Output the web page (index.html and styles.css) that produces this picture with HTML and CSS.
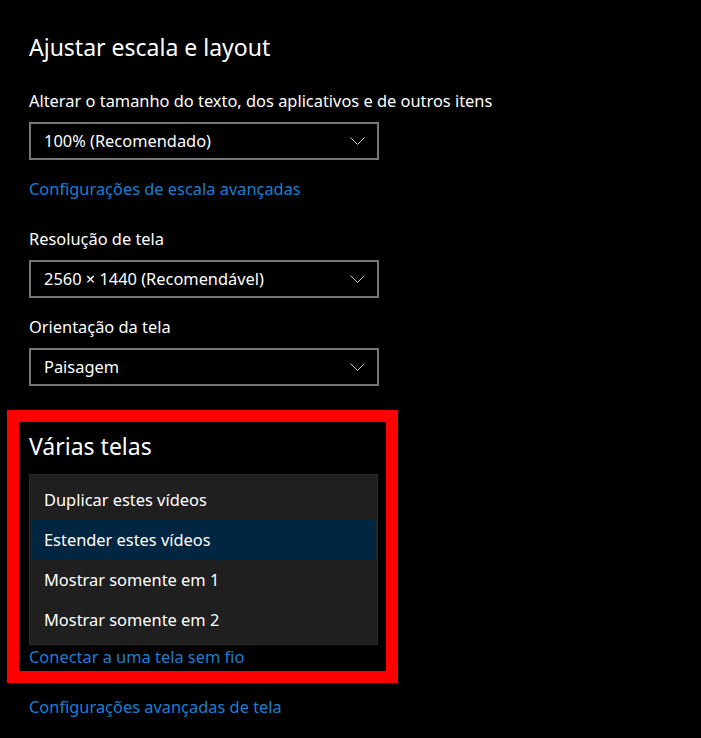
FILE: index.html
```html
<!DOCTYPE html>
<html lang="pt-BR">
<head>
    <meta charset="UTF-8">
    <meta name="viewport" content="width=device-width, initial-scale=1.0">
    <title>Vídeo</title>
    <link rel="stylesheet" href="styles.css">
</head>
<body>
    <div id="page">
        <h1 class="title">Ajustar escala e layout</h1>

        <p class="label">Alterar o tamanho do texto, dos aplicativos e de outros itens</p>
        <div class="combo">
            <span>100% (Recomendado)</span>
            <svg class="chevron" width="15" height="8" viewBox="0 0 15 8"><path d="M0.5 0.5 L7.5 7.5 L14.5 0.5" fill="none" stroke="#c8c8c8" stroke-width="1"/></svg>
        </div>
        <a class="link first" href="#">Configurações de escala avançadas</a>

        <p class="label">Resolução de tela</p>
        <div class="combo">
            <span>2560 × 1440 (Recomendável)</span>
            <svg class="chevron" width="15" height="8" viewBox="0 0 15 8"><path d="M0.5 0.5 L7.5 7.5 L14.5 0.5" fill="none" stroke="#c8c8c8" stroke-width="1"/></svg>
        </div>

        <p class="label small-gap">Orientação da tela</p>
        <div class="combo">
            <span>Paisagem</span>
            <svg class="chevron" width="15" height="8" viewBox="0 0 15 8"><path d="M0.5 0.5 L7.5 7.5 L14.5 0.5" fill="none" stroke="#c8c8c8" stroke-width="1"/></svg>
        </div>

        <div class="marked">
            <h2 class="title">Várias telas</h2>
            <ul class="menu">
                <li>Duplicar estes vídeos</li>
                <li class="selected">Estender estes vídeos</li>
                <li>Mostrar somente em 1</li>
                <li>Mostrar somente em 2</li>
            </ul>
            <a class="link wireless" href="#">Conectar a uma tela sem fio</a>
        </div>

        <a class="link last" href="#">Configurações avançadas de tela</a>
    </div>
</body>
</html>
```

FILE: styles.css
```css
* {
    margin: 0;
    padding: 0;
    box-sizing: border-box;
}

html, body {
    background: #000;
}

body {
    color: #fff;
    font-family: "Noto Sans", "Open Sans", sans-serif;
    font-size: 16.4px;
    line-height: 20px;
}

#page {
    padding: 33px 0 0 29px;
}

.title {
    font-size: 23px;
    font-weight: normal;
    line-height: 28px;
}

.label {
    margin-top: 30px;
    margin-bottom: 11px;
}

.label.small-gap {
    margin-top: 19px;
}

.combo {
    width: 350px;
    height: 38px;
    border: 2px solid #767676;
    display: flex;
    align-items: center;
    justify-content: space-between;
    padding: 0 12px 0 13px;
}

.chevron {
    display: block;
}

.link {
    display: block;
    width: max-content;
    color: #1a7fd4;
    text-decoration: none;
}

.link.first {
    margin-top: 19px;
}

.marked {
    margin: 24px 0 0 -22px;
    width: 391px;
    border: 12px solid #ff0000;
    padding: 10px 8px 4px 10px;
}

.menu {
    list-style: none;
    margin-top: 14px;
    background: #1f1f1f;
    border: 1px solid #2b2b2b;
    padding: 5px 1px 4px 1px;
}

.menu li {
    height: 40px;
    line-height: 40px;
    padding-left: 13px;
}

.menu li.selected {
    background: #002642;
}

.link.wireless {
    margin-top: 2px;
}

.link.last {
    margin-top: 14px;
}
```
